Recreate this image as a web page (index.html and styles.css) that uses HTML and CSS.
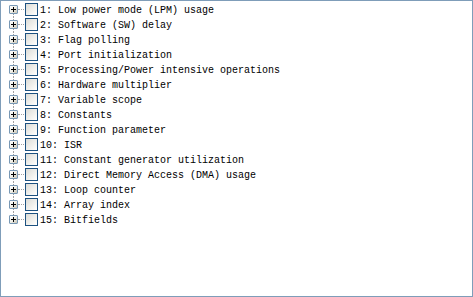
FILE: index.html
```html
<!DOCTYPE html>
<html lang="en">
<head>
    <meta charset="UTF-8">
    <meta name="viewport" content="width=device-width, initial-scale=1.0">
    <title>Checklist tree</title>
    <link rel="stylesheet" href="styles.css">
</head>
<body>
    <div class="tree">
        <div class="node"><span class="expander"></span><span class="dots"></span><span class="check"></span><span class="label">1: Low power mode (LPM) usage</span></div>
        <div class="node"><span class="expander"></span><span class="dots"></span><span class="check"></span><span class="label">2: Software (SW) delay</span></div>
        <div class="node"><span class="expander"></span><span class="dots"></span><span class="check"></span><span class="label">3: Flag polling</span></div>
        <div class="node"><span class="expander"></span><span class="dots"></span><span class="check"></span><span class="label">4: Port initialization</span></div>
        <div class="node"><span class="expander"></span><span class="dots"></span><span class="check"></span><span class="label">5: Processing/Power intensive operations</span></div>
        <div class="node"><span class="expander"></span><span class="dots"></span><span class="check"></span><span class="label">6: Hardware multiplier</span></div>
        <div class="node"><span class="expander"></span><span class="dots"></span><span class="check"></span><span class="label">7: Variable scope</span></div>
        <div class="node"><span class="expander"></span><span class="dots"></span><span class="check"></span><span class="label">8: Constants</span></div>
        <div class="node"><span class="expander"></span><span class="dots"></span><span class="check"></span><span class="label">9: Function parameter</span></div>
        <div class="node"><span class="expander"></span><span class="dots"></span><span class="check"></span><span class="label">10: ISR</span></div>
        <div class="node"><span class="expander"></span><span class="dots"></span><span class="check"></span><span class="label">11: Constant generator utilization</span></div>
        <div class="node"><span class="expander"></span><span class="dots"></span><span class="check"></span><span class="label">12: Direct Memory Access (DMA) usage</span></div>
        <div class="node"><span class="expander"></span><span class="dots"></span><span class="check"></span><span class="label">13: Loop counter</span></div>
        <div class="node"><span class="expander"></span><span class="dots"></span><span class="check"></span><span class="label">14: Array index</span></div>
        <div class="node"><span class="expander"></span><span class="dots"></span><span class="check"></span><span class="label">15: Bitfields</span></div>
    </div>
</body>
</html>
```

FILE: styles.css
```css
body {
    margin: 0;
    background: #fff;
}
.tree {
    width: 473px;
    height: 297px;
    box-sizing: border-box;
    border: 1px solid #7f9db9;
    padding: 1px 0 0 8px;
    font-family: "Liberation Mono", monospace;
    font-size: 10px;
    color: #000;
}
.node {
    position: relative;
    display: flex;
    align-items: center;
    height: 15px;
}
/* vertical connector between the expander boxes */
.node::before {
    content: "";
    position: absolute;
    left: 4px;
    top: 0;
    bottom: 0;
    border-left: 1px dotted #a0a0a0;
}
.node:first-child::before {
    top: 7px;
}
.node:last-child::before {
    bottom: 8px;
}
.expander {
    position: relative;
    z-index: 1;
    width: 9px;
    height: 9px;
    box-sizing: border-box;
    border: 1px solid #7898b5;
    border-radius: 1px;
    background: linear-gradient(135deg, #fff 0%, #f0efe8 50%, #c6c3b4 100%);
}
.expander::before,
.expander::after {
    content: "";
    position: absolute;
    background: #000;
}
.expander::before {
    left: 1px;
    top: 3px;
    width: 5px;
    height: 1px;
}
.expander::after {
    left: 3px;
    top: 1px;
    width: 1px;
    height: 5px;
}
.dots {
    width: 6px;
    margin-right: 1px;
    border-top: 1px dotted #a0a0a0;
}
.check {
    width: 13px;
    height: 13px;
    box-sizing: border-box;
    border: 1px solid #1c5180;
    background: linear-gradient(135deg, #dcdcd7 0%, #f5f5f2 70%, #fff 100%);
}
.label {
    margin-left: 2px;
    padding-top: 2px;
    white-space: pre;
}
```
